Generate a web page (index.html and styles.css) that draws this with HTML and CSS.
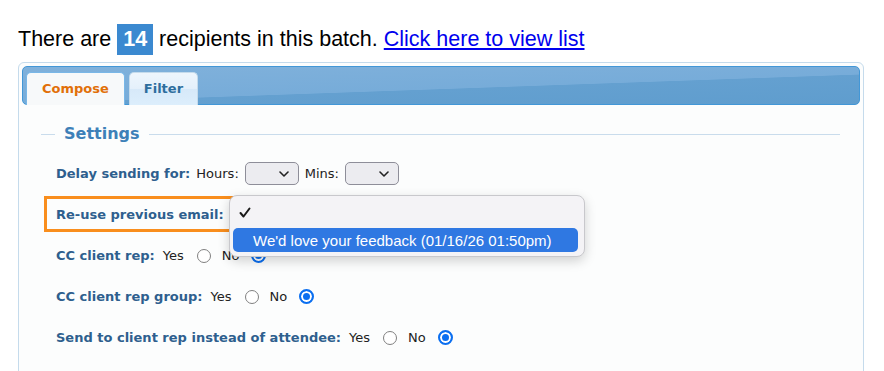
FILE: index.html
```html
<!DOCTYPE html>
<html lang="en">
<head>
    <meta charset="UTF-8">
    <meta name="viewport" content="width=device-width, initial-scale=1.0">
    <title>Batch Email</title>
    <link rel="stylesheet" href="styles.css">
</head>
<body>
    <p class="summary">There are <span class="count">14</span> recipients in this batch. <a href="#">Click here to view list</a></p>
    <div class="panel">
        <ul class="tabs">
            <li class="tab active">Compose</li>
            <li class="tab">Filter</li>
        </ul>
        <fieldset class="settings">
            <legend>Settings</legend>
            <div class="row">
                <span class="label">Delay sending for:</span>
                <span class="value">Hours:</span>
                <span class="select"><svg width="10" height="6" viewBox="0 0 10 6"><path d="M1 1l4 4 4-4" fill="none" stroke="#222" stroke-width="1.6" stroke-linecap="round" stroke-linejoin="round"/></svg></span>
                <span class="value">Mins:</span>
                <span class="select"><svg width="10" height="6" viewBox="0 0 10 6"><path d="M1 1l4 4 4-4" fill="none" stroke="#222" stroke-width="1.6" stroke-linecap="round" stroke-linejoin="round"/></svg></span>
            </div>
            <div class="row reuse">
                <span class="label highlight">Re-use previous email:</span>
                <div class="popup">
                    <div class="option"><svg class="check" width="12" height="11" viewBox="0 0 12 11"><path d="M1.5 6l3 3.5L10.5 1.5" fill="none" stroke="#1a1a1a" stroke-width="2" stroke-linecap="round" stroke-linejoin="round"/></svg></div>
                    <div class="option selected">We'd love your feedback (01/16/26 01:50pm)</div>
                </div>
            </div>
            <div class="row">
                <span class="label">CC client rep:</span>
                <span class="value yes">Yes</span><span class="radio"></span>
                <span class="value">No</span><span class="radio checked"></span>
            </div>
            <div class="row">
                <span class="label">CC client rep group:</span>
                <span class="value yes">Yes</span><span class="radio"></span>
                <span class="value">No</span><span class="radio checked"></span>
            </div>
            <div class="row">
                <span class="label">Send to client rep instead of attendee:</span>
                <span class="value yes">Yes</span><span class="radio"></span>
                <span class="value">No</span><span class="radio checked"></span>
            </div>
        </fieldset>
    </div>
</body>
</html>
```
FILE: styles.css
```css
*,
*::before,
*::after {
    box-sizing: border-box;
    padding: 0;
    margin: 0;
}

body {
    background: #fff;
    font-family: "DejaVu Sans", Verdana, sans-serif;
    overflow: hidden;
}

.summary {
    margin: 24px 0 0 18px;
    font-family: "Liberation Sans", Arial, sans-serif;
    font-size: 21.5px;
    line-height: 31px;
    color: #000;
}
.count {
    display: inline-block;
    padding: 0 6px;
    background-color: #3b89d0;
    color: #fff;
    font-weight: bold;
}
.summary a {
    color: #0000ee;
}

.panel {
    margin: 7px 20px 0 18px;
    height: 320px;
    padding: 3px;
    border: 1px solid #c5dbec;
    border-radius: 6px;
    background: #fcfdfd;
}

.tabs {
    display: flex;
    align-items: flex-end;
    gap: 4px;
    height: 39px;
    padding: 5px 3px 0;
    list-style: none;
    border: 1px solid #4297d7;
    border-radius: 5px;
    background: linear-gradient(178deg, #80b1db 0%, #77acd9 55%, #64a0d0 56%, #5f9dce 100%);
}
.tab {
    height: 33px;
    margin-bottom: -1px;
    padding: 0 14px;
    line-height: 32px;
    font-size: 13px;
    font-weight: bold;
    color: #2e6e9e;
    border: 1px solid #c5dbec;
    border-bottom: none;
    border-radius: 5px 5px 0 0;
    background: linear-gradient(#eef6fd 0%, #e4f0fb 50%, #d7e9f9 51%, #dceefc 100%);
}
.tab.active {
    padding: 0 15px;
    color: #e17009;
    border-color: #79b7e7;
    background: #f7f9fa;
}

.settings {
    position: relative;
    margin: 19px 20px 0 19px;
    padding: 9px 0 0 15px;
    border: none;
    border-top: 1px solid #c9dcec;
}
.settings legend {
    margin-left: -1px;
    padding: 0 9px;
    font-size: 16px;
    line-height: 20px;
    font-weight: bold;
    color: #3d80b8;
}

.row {
    position: relative;
    display: flex;
    align-items: center;
    height: 41px;
    font-size: 13px;
}
.label {
    font-size: 13px;
    font-weight: bold;
    color: #2e5f8e;
}
.value {
    color: #222;
}
.label + .value {
    margin-left: 6px;
}
.label + .value.yes {
    margin-left: 8px;
}

.select {
    display: flex;
    align-items: center;
    justify-content: flex-end;
    width: 54px;
    height: 23px;
    margin: 0 6px 0 6px;
    padding-right: 9px;
    border: 1px solid #8e8e99;
    border-radius: 5px;
    background: #ececf0;
}

.radio {
    width: 14px;
    height: 14px;
    margin: 0 11px 0 13px;
    border: 1px solid #808080;
    border-radius: 50%;
    background: #fff;
}
.radio.checked {
    width: 15px;
    height: 15px;
    margin: 0 0 0 12px;
    border: 2px solid #0b6ff0;
    background: #0b6ff0;
    box-shadow: inset 0 0 0 2px #fff;
}

.highlight {
    position: relative;
}
.highlight::after {
    content: "";
    position: absolute;
    left: -12px;
    right: -9px;
    top: -11px;
    bottom: -10px;
    border: 3px solid #f98e1d;
}

.popup {
    position: absolute;
    left: 173px;
    top: 1px;
    z-index: 2;
    width: 356px;
    height: 62px;
    padding: 4px 6px 4px 3px;
    border: 1px solid #c8c8cc;
    border-radius: 8px;
    background: #f4f3f6;
    box-shadow: 0 4px 12px rgba(0, 0, 0, 0.18);
    font-family: "Liberation Sans", Arial, sans-serif;
    font-size: 15px;
}
.option {
    display: flex;
    align-items: center;
    height: 24px;
    padding-left: 20px;
    color: #222;
}
.option .check {
    margin-left: -14px;
}
.option.selected {
    margin-top: 4px;
    border-radius: 5px;
    background: #2f78e2;
    color: #fff;
}
```
